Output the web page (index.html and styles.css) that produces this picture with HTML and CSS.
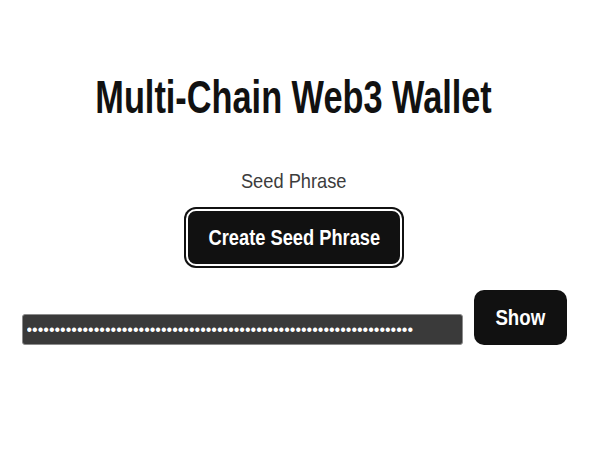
FILE: index.html
```html
<!DOCTYPE html>
<html lang="en">
<head>
<meta charset="utf-8">
<title>Multi-Chain Web3 Wallet</title>
<link rel="stylesheet" href="styles.css">
</head>
<body>
<main class="page">
  <h1 class="title">Multi-Chain Web3 Wallet</h1>
  <p class="label"><span class="label-text">Seed Phrase</span></p>
  <button class="create-btn" type="button"><span class="btn-text">Create Seed Phrase</span></button>
  <div class="seed-row">
    <input class="seed-input" type="password" value="abandon ability able about above absent absorb abstract absurd abuse " readonly>
    <button class="show-btn" type="button"><span class="btn-text show-text">Show</span></button>
  </div>
</main>
</body>
</html>
```
FILE: styles.css
```css
html, body {
  margin: 0;
  padding: 0;
  background: #ffffff;
}

.page {
  width: 588px;
  padding-top: 70px;
  display: flex;
  flex-direction: column;
  align-items: center;
  font-family: "Liberation Sans", Arial, sans-serif;
}

.title {
  margin: 0;
  font-size: 47px;
  line-height: 54px;
  font-weight: 700;
  color: #111111;
  white-space: nowrap;
  transform: scaleX(0.73);
}

.label {
  margin: 45px 0 0;
  font-size: 21px;
  line-height: 24px;
  color: #3c3c3c;
}

.label-text {
  display: inline-block;
  transform: scaleX(0.87);
}

.create-btn {
  margin-top: 16px;
  width: 216px;
  height: 57px;
  background: #111111;
  color: #ffffff;
  border: 2px solid #ffffff;
  border-radius: 10px;
  box-shadow: 0 0 0 2px #111111;
  font-family: inherit;
  font-size: 22px;
  font-weight: 700;
  padding: 0;
  cursor: pointer;
}

.btn-text {
  display: inline-block;
  white-space: nowrap;
  transform: scaleX(0.83);
}

.seed-row {
  margin-top: 24px;
  width: 545px;
  display: flex;
  align-items: flex-end;
  gap: 11px;
}

.seed-input {
  flex: 1;
  height: 31px;
  box-sizing: border-box;
  background: #3a3a3a;
  border: 1px solid #8c8c8c;
  border-radius: 3px;
  padding: 0 4px;
  color: #ffffff;
  font-family: "Liberation Sans", Arial, sans-serif;
  font-size: 16px;
  outline: none;
}

.show-btn {
  width: 93px;
  height: 55px;
  background: #111111;
  color: #ffffff;
  border: none;
  border-radius: 10px;
  font-family: inherit;
  font-size: 22px;
  font-weight: 700;
  padding: 0;
  cursor: pointer;
}

.show-text {
  transform: scaleX(0.85);
}
```
